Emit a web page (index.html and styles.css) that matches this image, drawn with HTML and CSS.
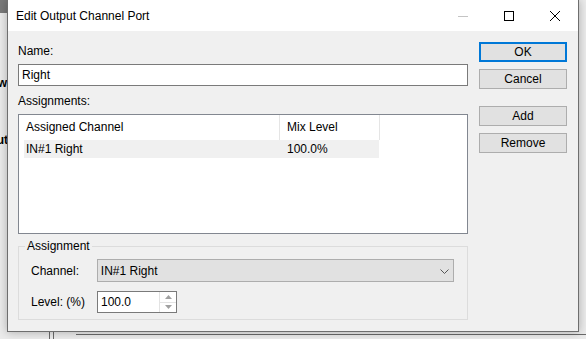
FILE: index.html
```html
<!DOCTYPE html>
<html lang="en">
<head>
    <meta charset="UTF-8">
    <title>Edit Output Channel Port</title>
    <link rel="stylesheet" href="styles.css">
</head>
<body>

<!-- bits of the window behind the dialog -->
<div class="behind">
    <div class="behind-top"></div>
    <span class="frag frag-1">w</span>
    <span class="frag frag-2">ut</span>
    <div class="line-v line-v1"></div>
    <div class="line-v line-v2"></div>
    <div class="line-h"></div>
</div>

<div class="dialog">
    <div class="titlebar">
        <span class="title">Edit Output Channel Port</span>
        <div class="caption">
            <div class="cap-btn">
                <svg width="10" height="10" viewBox="0 0 10 10"><path d="M0 5.5H10" stroke="#c4c4c4" stroke-width="1"/></svg>
            </div>
            <div class="cap-btn">
                <svg width="10" height="10" viewBox="0 0 10 10"><rect x="0.5" y="0.5" width="9" height="9" fill="none" stroke="#000" stroke-width="1"/></svg>
            </div>
            <div class="cap-btn">
                <svg width="10" height="10" viewBox="0 0 10 10"><path d="M0 0L10 10M10 0L0 10" stroke="#000" stroke-width="1"/></svg>
            </div>
        </div>
    </div>

    <div class="content">
        <div class="main">
            <div class="lbl">Name:</div>
            <div class="textbox">Right</div>

            <div class="lbl lbl-assign">Assignments:</div>
            <div class="listview">
                <div class="lv-header">
                    <div class="hcol hcol-1">Assigned Channel</div>
                    <div class="hcol hcol-2">Mix Level</div>
                </div>
                <div class="lv-row">
                    <div class="rcol rcol-1">IN#1 Right</div>
                    <div class="rcol rcol-2">100.0%</div>
                </div>
            </div>

            <div class="group">
                <span class="legend">Assignment</span>
                <div class="field-row">
                    <span class="field-lbl">Channel:</span>
                    <div class="combo">
                        <span>IN#1 Right</span>
                        <svg class="chevron" width="9" height="5" viewBox="0 0 9 5"><path d="M0.5 0.5L4.5 4.5L8.5 0.5" fill="none" stroke="#555" stroke-width="1"/></svg>
                    </div>
                </div>
                <div class="field-row field-row-2">
                    <span class="field-lbl">Level: (%)</span>
                    <div class="spin">
                        <span class="spin-val">100.0</span>
                        <div class="spin-btns">
                            <div class="spin-btn"><svg width="7" height="4" viewBox="0 0 7 4"><path d="M3.5 0L7 4H0Z" fill="#a0a0a0"/></svg></div>
                            <div class="spin-btn"><svg width="7" height="4" viewBox="0 0 7 4"><path d="M0 0H7L3.5 4Z" fill="#a0a0a0"/></svg></div>
                        </div>
                    </div>
                </div>
            </div>
        </div>

        <div class="side">
            <div class="btn btn-default">OK</div>
            <div class="btn">Cancel</div>
            <div class="btn btn-add">Add</div>
            <div class="btn">Remove</div>
        </div>
    </div>
</div>

</body>
</html>
```

FILE: styles.css
```css
body {
    margin: 0;
    width: 586px;
    height: 339px;
    overflow: hidden;
    position: relative;
    background-color: #ebebeb;
    font-family: "Segoe UI", "Liberation Sans", Arial, sans-serif;
    font-size: 12px;
    color: #000;
}

/* window behind */
.behind-top {
    position: absolute;
    left: 0;
    top: 0;
    width: 7px;
    height: 13px;
    background-color: #7a7a7a;
}

.frag {
    position: absolute;
    right: 579px;
    font-size: 12px;
    font-weight: bold;
    line-height: 14px;
}

.frag-1 {
    top: 76px;
}

.frag-2 {
    top: 133px;
    right: 578px;
}

.line-v {
    position: absolute;
    top: 330px;
    width: 1px;
    height: 10px;
    background-color: #6a6a6a;
}

.line-v1 {
    left: 49px;
}

.line-v2 {
    left: 53px;
}

.line-h {
    position: absolute;
    left: 76px;
    top: 334px;
    width: 520px;
    height: 1px;
    background-color: #6a6a6a;
}

/* dialog */
.dialog {
    position: relative;
    margin-left: 7px;
    width: 572px;
    height: 332px;
    box-sizing: border-box;
    border: 1px solid #6e6e6e;
    border-top: none;
    background-color: #f0f0f0;
    box-shadow: 0 0 9px rgba(0, 0, 0, 0.28);
}

.titlebar {
    height: 31px;
    display: flex;
    align-items: center;
    justify-content: space-between;
    background-color: #fff;
}

.title {
    padding-left: 8px;
}

.caption {
    display: flex;
    align-self: stretch;
}

.cap-btn {
    width: 46px;
    display: flex;
    align-items: center;
    justify-content: center;
}

.content {
    display: flex;
    padding: 0 10px;
}

.main {
    width: 450px;
    padding-top: 13px;
}

.lbl {
    line-height: 15px;
    margin-bottom: 5px;
}

.lbl-assign {
    margin-top: 8px;
}

.textbox {
    height: 22px;
    box-sizing: border-box;
    border: 1px solid #7a7a7a;
    background-color: #fff;
    padding-left: 3px;
    line-height: 20px;
}

/* list view */
.listview {
    height: 120px;
    box-sizing: border-box;
    border: 1px solid #828790;
    background-color: #fff;
}

.lv-header {
    display: flex;
    height: 25px;
}

.hcol {
    line-height: 25px;
    padding-left: 7px;
    box-sizing: border-box;
    border-right: 1px solid #e5e5e5;
}

.hcol-1 {
    width: 261px;
}

.hcol-2 {
    width: 100px;
}

.lv-row {
    display: flex;
    margin-left: 5px;
    width: 355px;
    height: 18px;
    line-height: 18px;
    background-color: #f0f0f0;
}

.rcol-1 {
    width: 256px;
    padding-left: 2px;
    box-sizing: border-box;
}

.rcol-2 {
    padding-left: 7px;
}

/* group box */
.group {
    margin-top: 12px;
    height: 74px;
    box-sizing: border-box;
    border: 1px solid #dcdcdc;
    padding: 0 13px 0 12px;
}

.legend {
    display: table;
    margin: -8px 0 0 -6px;
    padding: 0 2px;
    line-height: 15px;
    background-color: #f0f0f0;
}

.field-row {
    display: flex;
    align-items: center;
    margin-top: 5px;
}

.field-row-2 {
    margin-top: 9px;
}

.field-lbl {
    width: 66px;
}

.combo {
    width: 358px;
    height: 23px;
    box-sizing: border-box;
    border: 1px solid #adadad;
    background-color: #e1e1e1;
    display: flex;
    align-items: center;
    justify-content: space-between;
    padding: 0 4px 0 3px;
}

.chevron {
    margin-top: 1px;
}

.spin {
    width: 80px;
    height: 22px;
    box-sizing: border-box;
    border: 1px solid #7a7a7a;
    background-color: #fff;
    display: flex;
}

.spin-val {
    flex: 1;
    padding-left: 3px;
    line-height: 20px;
}

.spin-btns {
    width: 16px;
    display: flex;
    flex-direction: column;
    border-left: 1px solid #e3e3e3;
}

.spin-btn {
    flex: 1;
    display: flex;
    align-items: center;
    justify-content: center;
}

.spin-btn + .spin-btn {
    border-top: 1px solid #e3e3e3;
}

/* buttons */
.side {
    margin-left: 11px;
    padding-top: 11px;
    width: 88px;
}

.btn {
    height: 20px;
    box-sizing: border-box;
    border: 1px solid #adadad;
    background-color: #e1e1e1;
    text-align: center;
    line-height: 18px;
    margin-bottom: 7px;
}

.btn-default {
    border: 2px solid #0078d7;
    line-height: 16px;
}

.btn-add {
    margin-top: 17px;
}
```
